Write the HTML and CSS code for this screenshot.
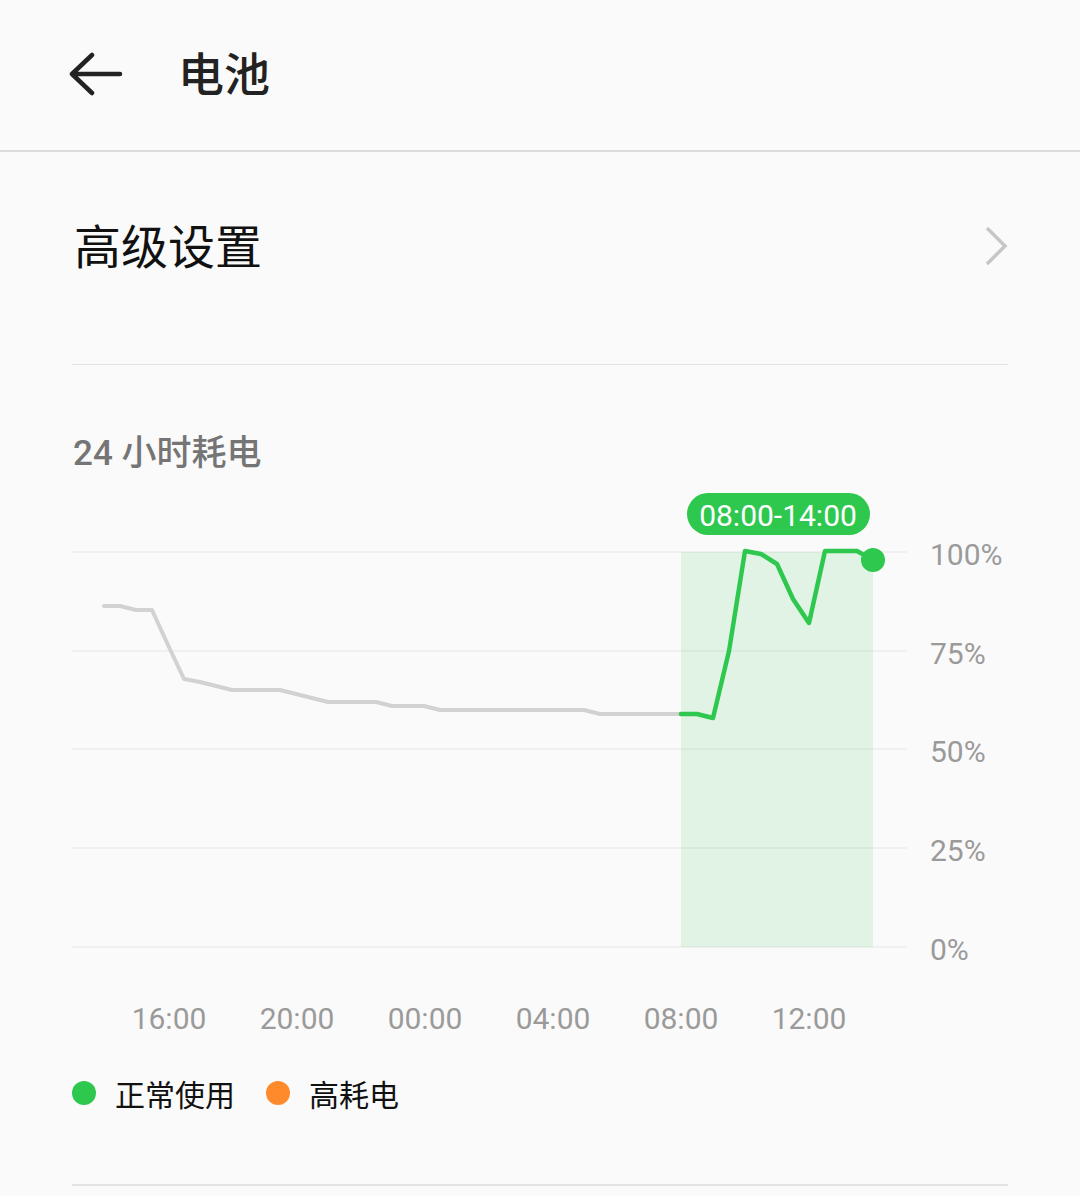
FILE: index.html
```html
<!DOCTYPE html>
<html lang="zh-CN">
<head>
    <meta charset="UTF-8">
    <meta name="viewport" content="width=device-width, initial-scale=1.0">
    <title>电池</title>
    <link rel="stylesheet" href="styles.css">
</head>
<body>
<div class="page">
    <header class="app-bar">
        <svg class="back-icon" width="56" height="44" viewBox="0 0 56 44">
            <path d="M4 22 H52 M24 3 L4 22 L24 41" fill="none" stroke="#222" stroke-width="4.5" stroke-linecap="round" stroke-linejoin="round"/>
        </svg>
        <h1 class="app-title">电池</h1>
    </header>

    <div class="settings-row">
        <span class="settings-label">高级设置</span>
        <svg class="chevron" width="26" height="42" viewBox="0 0 26 42">
            <path d="M3 3 L21 21 L3 39" fill="none" stroke="#c6c6c6" stroke-width="3.5"/>
        </svg>
    </div>
    <div class="divider"></div>

    <div class="section-title">24 小时耗电</div>

    <svg class="chart" width="1080" height="570" viewBox="0 480 1080 570">
        <g class="grid" stroke="#ededed" stroke-width="1.5">
            <line x1="72" y1="553" x2="907" y2="553"/>
            <line x1="72" y1="652" x2="907" y2="652"/>
            <line x1="72" y1="750" x2="907" y2="750"/>
            <line x1="72" y1="849" x2="907" y2="849"/>
            <line x1="72" y1="948" x2="907" y2="948"/>
        </g>

        <rect x="681" y="553" width="192" height="395" fill="#2ec84f" fill-opacity="0.12"/>

        <polyline fill="none" stroke="#d2d2d2" stroke-width="4" stroke-linejoin="round" stroke-linecap="round"
            points="104,607 120,607 136,611 152,611 168,646 184,680 200,683 216,687 232,691 248,691 264,691 280,691 296,695 312,699 328,703 344,703 360,703 376,703 392,707 408,707 424,707 440,711 456,711 472,711 488,711 504,711 520,711 536,711 552,711 568,711 584,711 600,715 616,715 632,715 648,715 664,715 681,715"/>
        <polyline fill="none" stroke="#2ec84f" stroke-width="4.5" stroke-linejoin="round" stroke-linecap="round"
            points="681,715 697,715 713,719 729,652 745,552 761,555 777,565 793,600 809,624 825,552 841,552 857,552 873,561"/>
        <circle cx="873" cy="561" r="12" fill="#2ec84f"/>

        <rect x="687" y="494" width="183" height="42" rx="21" fill="#2ec84f"/>
        <text class="tip-text" x="778" y="516">08:00-14:00</text>

        <g class="y-labels">
            <text x="930" y="555">100%</text>
            <text x="930" y="654">75%</text>
            <text x="930" y="752">50%</text>
            <text x="930" y="851">25%</text>
            <text x="930" y="950">0%</text>
        </g>
        <g class="x-labels">
            <text x="169" y="1019">16:00</text>
            <text x="297" y="1019">20:00</text>
            <text x="425" y="1019">00:00</text>
            <text x="553" y="1019">04:00</text>
            <text x="681" y="1019">08:00</text>
            <text x="809" y="1019">12:00</text>
        </g>
    </svg>

    <div class="legend">
        <span class="legend-item"><span class="dot dot-normal"></span>正常使用</span>
        <span class="legend-item"><span class="dot dot-high"></span>高耗电</span>
    </div>
    <div class="divider bottom"></div>
</div>
</body>
</html>
```

FILE: styles.css
```css
body {
    margin: 0;
    background-color: #fafafa;
    font-family: Roboto, "Noto Sans CJK SC", sans-serif;
    color: #222;
}
.page {
    width: 1080px;
    height: 1196px;
    overflow: hidden;
}
.app-bar {
    height: 150px;
    display: flex;
    align-items: center;
    border-bottom: 2px solid #dcdcdc;
    box-sizing: content-box;
}
.back-icon {
    margin-left: 68px;
    margin-top: -2px;
}
.app-title {
    margin: 0 0 0 54px;
    font-size: 46px;
    font-weight: 500;
    line-height: 1;
    color: #222;
}
.settings-row {
    height: 212px;
    box-sizing: border-box;
    padding-bottom: 30px;
    margin: 0 72px 0 74px;
    display: flex;
    align-items: center;
    justify-content: space-between;
}
.settings-label {
    font-size: 47px;
    color: #111;
}
.chevron {
    margin-right: -2px;
    margin-top: 6px;
}
.divider {
    height: 1px;
    margin: 0 72px;
    background-color: #e2e2e2;
}
.divider.bottom {
    margin-top: 47px;
    height: 2px;
}
.section-title {
    height: 114px;
    box-sizing: border-box;
    padding: 71px 0 0 73px;
    font-size: 35px;
    line-height: 36px;
    font-weight: 500;
    color: #757575;
}
.chart {
    display: block;
}
.chart text {
    font-family: Roboto, sans-serif;
    dominant-baseline: central;
}
.tip-text {
    fill: #fff;
    font-size: 30px;
    text-anchor: middle;
}
.y-labels text {
    fill: #9a9a9a;
    font-size: 30px;
}
.x-labels text {
    fill: #9a9a9a;
    font-size: 30px;
    text-anchor: middle;
}
.legend {
    height: 88px;
    display: flex;
    align-items: center;
    padding-left: 72px;
    gap: 31px;
}
.legend-item {
    display: flex;
    align-items: center;
    font-size: 30px;
    color: #111;
}
.dot {
    width: 24px;
    height: 24px;
    border-radius: 50%;
    margin-right: 19px;
}
.dot-normal {
    background-color: #2ec84f;
}
.dot-high {
    background-color: #ff8a2b;
}
```
